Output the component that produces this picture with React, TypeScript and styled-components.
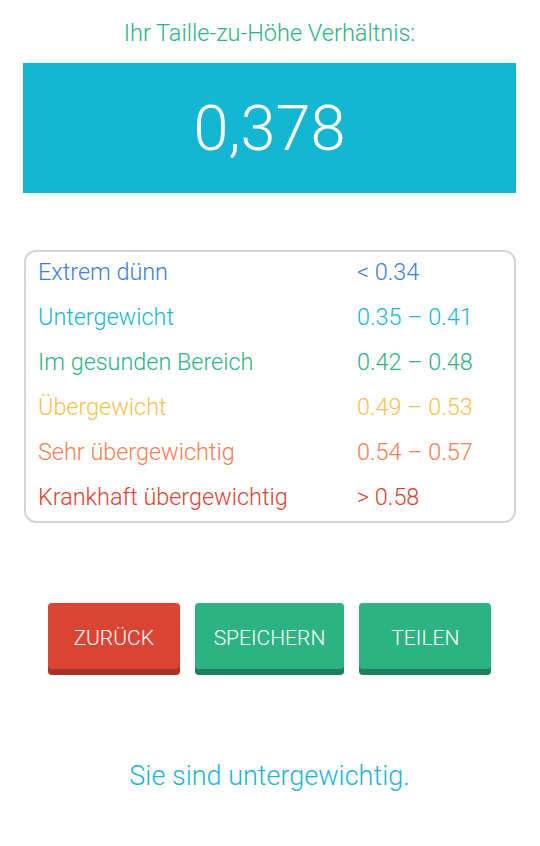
import React from 'react';
import styled, { createGlobalStyle } from 'styled-components';

const GlobalStyle = createGlobalStyle`
  body {
    margin: 0;
    background: #ffffff;
    font-family: Roboto, "Noto Sans", sans-serif;
    font-weight: 300;
  }
`;

const ranges = [
  { label: 'Extrem dünn', value: '< 0.34', color: '#3b7ed8' },
  { label: 'Untergewicht', value: '0.35 – 0.41', color: '#17b6d3' },
  { label: 'Im gesunden Bereich', value: '0.42 – 0.48', color: '#2cb384' },
  { label: 'Übergewicht', value: '0.49 – 0.53', color: '#f9bf4d' },
  { label: 'Sehr übergewichtig', value: '0.54 – 0.57', color: '#f57d52' },
  { label: 'Krankhaft übergewichtig', value: '> 0.58', color: '#dc3f33' },
];

function App() {
  return (
    <>
      <GlobalStyle />
      <Page>
        <Title>Ihr Taille-zu-Höhe Verhältnis:</Title>
        <ResultBox>0,378</ResultBox>
        <RangeTable>
          {ranges.map((r) => (
            <RangeRow key={r.label} color={r.color}>
              <span>{r.label}</span>
              <span>{r.value}</span>
            </RangeRow>
          ))}
        </RangeTable>
        <ButtonBar>
          <ActionButton $variant="red">Zurück</ActionButton>
          <ActionButton $variant="green">Speichern</ActionButton>
          <ActionButton $variant="green">Teilen</ActionButton>
        </ButtonBar>
        <Verdict>Sie sind untergewichtig.</Verdict>
      </Page>
    </>
  );
}

export default App;

const Page = styled.div`
  display: flex;
  flex-direction: column;
  padding: 19px 24px 40px 23px;
`;

const Title = styled.div`
  text-align: center;
  color: #2cb384;
  font-size: 23.5px;
  line-height: 28px;
`;

const ResultBox = styled.div`
  margin-top: 16px;
  height: 130px;
  display: flex;
  align-items: center;
  justify-content: center;
  background-color: #14b7d3;
  color: #ffffff;
  font-size: 63px;
  font-weight: 300;
`;

const RangeTable = styled.div`
  margin: 57px 0 0 1px;
  padding: 0 12px 4px;
  display: flex;
  flex-direction: column;
  gap: 5px;
  border: 2px solid #d4d4d4;
  border-radius: 12px;
`;

const RangeRow = styled.div<{ color: string }>`
  display: grid;
  grid-template-columns: 319px 1fr;
  height: 40px;
  line-height: 40px;
  font-size: 23.4px;
  color: ${({ color }) => color};
`;

const ButtonBar = styled.div`
  margin-top: 80px;
  display: flex;
  justify-content: center;
  gap: 15px;
`;

const ActionButton = styled.button<{ $variant: 'red' | 'green' }>`
  min-width: 132px;
  height: 66px;
  padding: 4px 19px 0;
  border: none;
  border-radius: 4px;
  font-family: Roboto, sans-serif;
  font-weight: 300;
  font-size: 21px;
  text-transform: uppercase;
  color: #ffffff;
  background-color: ${({ $variant }) => ($variant === 'red' ? '#d94433' : '#2db284')};
  box-shadow: 0 6px 0 ${({ $variant }) => ($variant === 'red' ? '#a83226' : '#217d5e')};
  margin-bottom: 6px;
`;

const Verdict = styled.div`
  margin-top: 85px;
  text-align: center;
  color: #1cb5d3;
  font-size: 27px;
  line-height: 32px;
`;
